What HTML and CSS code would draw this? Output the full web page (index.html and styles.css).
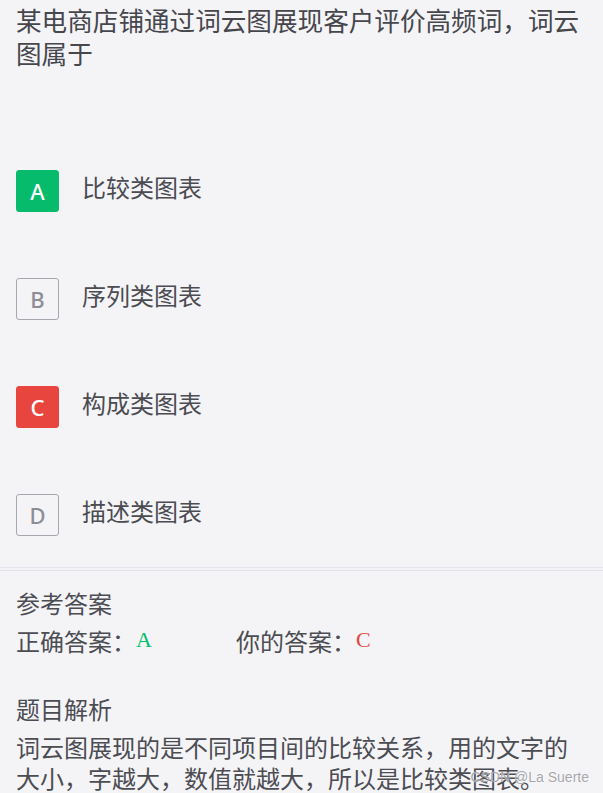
FILE: index.html
```html
<!DOCTYPE html>
<html lang="zh">
<head>
<meta charset="utf-8">
<link rel="stylesheet" href="styles.css">
</head>
<body>
<div class="page">
  <div class="question-block">
    <div class="question">某电商店铺通过词云图展现客户评价高频词，词云图属于</div>
    <div class="options">
      <div class="option"><span class="key key-right">A</span><span class="opt-text">比较类图表</span></div>
      <div class="option"><span class="key">B</span><span class="opt-text">序列类图表</span></div>
      <div class="option"><span class="key key-wrong">C</span><span class="opt-text">构成类图表</span></div>
      <div class="option"><span class="key">D</span><span class="opt-text">描述类图表</span></div>
    </div>
  </div>
  <div class="answer-block">
    <div class="sec-title">参考答案</div>
    <div class="answers">
      <div class="ans">正确答案：<span class="ans-val ans-right">A</span></div>
      <div class="ans">你的答案：<span class="ans-val ans-wrong">C</span></div>
    </div>
    <div class="sec-title analysis-title">题目解析</div>
    <div class="analysis">词云图展现的是不同项目间的比较关系，用的文字的大小，字越大，数值就越大，所以是比较类图表。</div>
  </div>
  <div class="watermark">CSDN @La Suerte</div>
</div>
</body>
</html>
```
FILE: styles.css
```css
html, body {
  margin: 0;
  padding: 0;
  background: #f4f4f7;
}
body {
  font-family: "Noto Sans CJK SC", "Noto Sans", sans-serif;
  color: #4c4c53;
  overflow: hidden;
  height: 793px;
}
.page {
  position: relative;
  height: 793px;
}
.question-block {
  border-bottom: 1px solid #e4e2ec;
  padding-bottom: 31px;
}
.question {
  padding: 3px 16px 0;
  font-size: 25.6px;
  line-height: 33px;
  color: #46464d;
}
.options {
  margin-top: 101px;
  padding: 0 16px;
  display: flex;
  flex-direction: column;
  gap: 66px;
}
.option {
  display: flex;
  align-items: center;
  gap: 23px;
  height: 42px;
}
.key {
  box-sizing: border-box;
  width: 43px;
  height: 42px;
  border: 1px solid #a7a7b0;
  border-radius: 3px;
  display: flex;
  align-items: center;
  justify-content: center;
  font-family: "Noto Sans", sans-serif;
  font-size: 22px;
  font-weight: 500;
  color: #8d8d96;
}
.key-right {
  background: #07bb6c;
  border-color: #07bb6c;
  color: #ffffff;
}
.key-wrong {
  background: #e7453d;
  border-color: #e7453d;
  color: #ffffff;
}
.opt-text {
  font-size: 24px;
  line-height: 32px;
  margin-bottom: 9px;
  color: #4b4b52;
}
.answer-block {
  border-top: 1px solid #e4e2ec;
  margin-top: 2px;
  padding: 17px 16px 0;
}
.sec-title {
  font-size: 24px;
  line-height: 30px;
}
.answers {
  display: flex;
  margin-top: 8px;
  font-size: 24px;
  line-height: 30px;
}
.ans {
  width: 220px;
}
.ans-val {
  font-family: "Liberation Serif", serif;
  font-size: 22px;
  position: relative;
  top: -4px;
}
.ans-right { color: #07bb6c; }
.ans-wrong { color: #e7453d; }
.analysis-title {
  margin-top: 35px;
}
.analysis {
  margin-top: 7px;
  font-size: 24px;
  line-height: 31px;
}
.watermark {
  position: absolute;
  right: 14px;
  bottom: 8px;
  font-family: "Liberation Sans", sans-serif;
  font-size: 14px;
  color: rgba(150, 150, 155, 0.85);
  text-shadow: 0 0 1px #ffffff;
}
```
